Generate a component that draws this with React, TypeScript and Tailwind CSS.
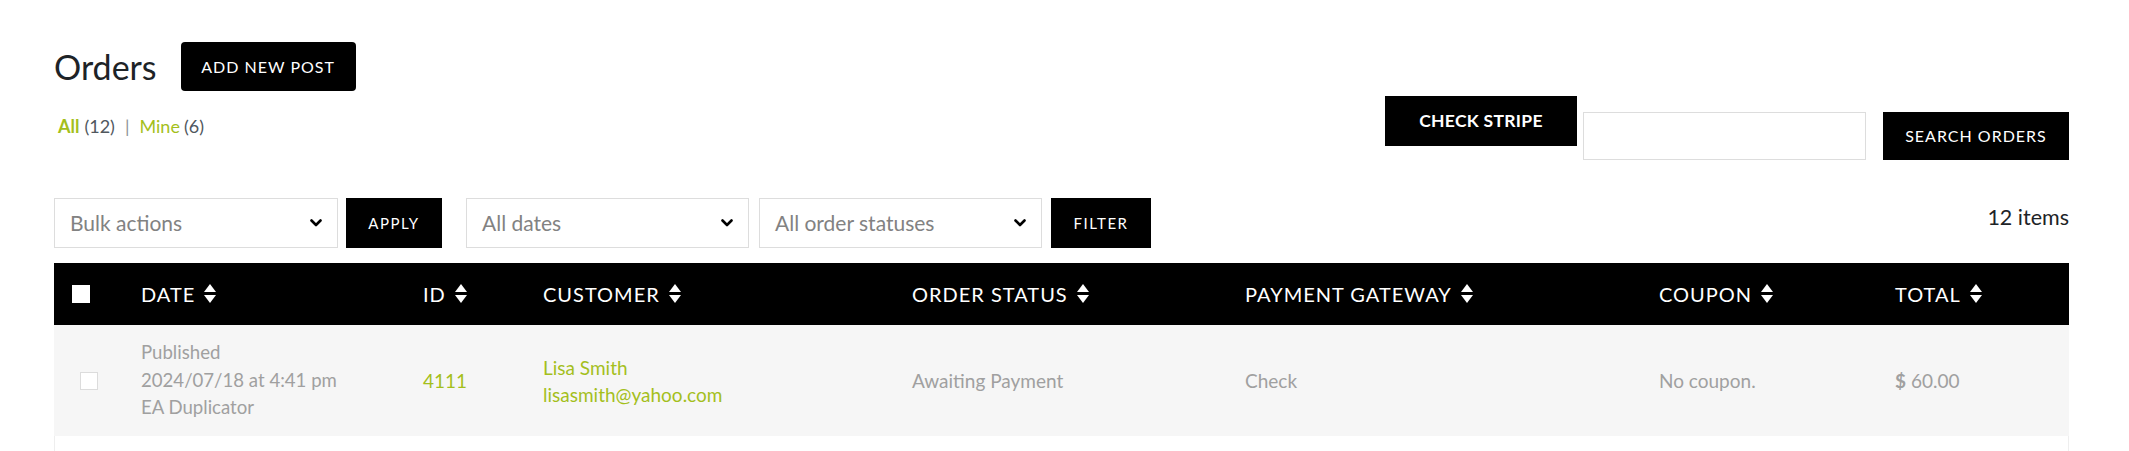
import React from 'react';

const green = 'text-[#a4bf1c]';

const SortIcon: React.FC = () => (
  <svg width="12" height="19" viewBox="0 0 12 19" className="ml-[9px] shrink-0" fill="white">
    <polygon points="6,0 12,8 0,8" />
    <polygon points="0,11 12,11 6,19" />
  </svg>
);

const Chevron: React.FC = () => (
  <svg width="12" height="8" viewBox="0 0 12 8" fill="none" stroke="black" strokeWidth="2.6" strokeLinecap="round" strokeLinejoin="round">
    <path d="M1.5 1.5 L6 6 L10.5 1.5" />
  </svg>
);

const Select: React.FC<{ label: string; className?: string }> = ({ label, className }) => (
  <div className={`flex h-[50px] items-center justify-between border border-[#dddddd] bg-white pl-[15px] pr-[15px] ${className ?? ''}`}>
    <span className="text-[21px] text-[#828282]">{label}</span>
    <Chevron />
  </div>
);

const BlackButton: React.FC<{ label: string; className?: string }> = ({ label, className }) => (
  <button className={`flex items-center justify-center bg-black text-white ${className ?? ''}`}>{label}</button>
);

const columns = 'grid grid-cols-[87px_282px_120px_369px_333px_414px_236px_1fr]';

const headers = ['DATE', 'ID', 'CUSTOMER', 'ORDER STATUS', 'PAYMENT GATEWAY', 'COUPON', 'TOTAL'];

export default function App() {
  return (
    <div className="min-h-screen bg-white pl-[54px] pr-[60px] font-['Lato',sans-serif]">
      {/* page title + search */}
      <div className="flex items-start justify-between pt-[42px]">
        <div>
          <div className="flex items-center">
            <h1 className="text-[34px] leading-none text-[#1d2327]">Orders</h1>
            <BlackButton
              label="ADD NEW POST"
              className="ml-[24px] h-[49px] w-[175px] rounded-[4px] text-[16px] tracking-[1px]"
            />
          </div>
          <div className="ml-[4px] mt-[23px] flex items-center text-[18px] leading-[24px] text-[#50575e]">
            <span className={`font-bold ${green}`}>All</span>
            <span className="ml-[5px]">(12)</span>
            <span className="mx-[10px] text-[#8c8f94]">|</span>
            <span className={green}>Mine</span>
            <span className="ml-[4px]">(6)</span>
          </div>
        </div>
        <div className="mt-[54px] flex items-start">
          <BlackButton label="CHECK STRIPE" className="h-[50px] w-[192px] text-[17.5px] font-bold tracking-[0.3px]" />
          <input className="ml-[6px] mt-[16px] h-[48px] w-[283px] border border-[#dddddd] bg-white outline-none" />
          <BlackButton label="SEARCH ORDERS" className="ml-[17px] mt-[16px] h-[48px] w-[186px] text-[16px] tracking-[1px]" />
        </div>
      </div>

      {/* filters */}
      <div className="mt-[38px] flex items-start">
        <Select label="Bulk actions" className="w-[284px]" />
        <BlackButton label="APPLY" className="ml-[8px] h-[50px] w-[96px] text-[15px] tracking-[1.5px]" />
        <Select label="All dates" className="ml-[24px] w-[283px]" />
        <Select label="All order statuses" className="ml-[10px] w-[283px]" />
        <BlackButton label="FILTER" className="ml-[9px] h-[50px] w-[100px] text-[15px] tracking-[1.5px]" />
        <div className="ml-auto mt-[5px] text-[21.5px] leading-[28px] text-[#1d2327]">12 items</div>
      </div>

      {/* table */}
      <div className="mt-[15px]">
        <div className={`${columns} h-[62px] items-center bg-black text-white`}>
          <div className="pl-[18px]">
            <div className="h-[18px] w-[18px] bg-white" />
          </div>
          {headers.map((h) => (
            <div key={h} className="flex items-center pb-[1px] text-[20px] tracking-[1px]">
              <span>{h}</span>
              <SortIcon />
            </div>
          ))}
        </div>
        <div className={`${columns} h-[111px] items-center bg-[#f6f6f6] text-[19px] leading-[27.5px] text-[#a0a0a0]`}>
          <div className="pl-[26px]">
            <div className="h-[18px] w-[18px] border border-[#dcdcdc] bg-white" />
          </div>
          <div className="text-[18.6px]">
            <div>Published</div>
            <div>2024/07/18 at 4:41 pm</div>
            <div>EA Duplicator</div>
          </div>
          <div className={green}>4111</div>
          <div className={`${green} leading-[27px]`}>
            <div>Lisa Smith</div>
            <div>lisasmith@yahoo.com</div>
          </div>
          <div>Awaiting Payment</div>
          <div>Check</div>
          <div>No coupon.</div>
          <div>
            <span className="font-bold">$</span> 60.00
          </div>
        </div>
        <div className="h-[20px] border-x border-[#eeeeee]" />
      </div>
    </div>
  );
}
